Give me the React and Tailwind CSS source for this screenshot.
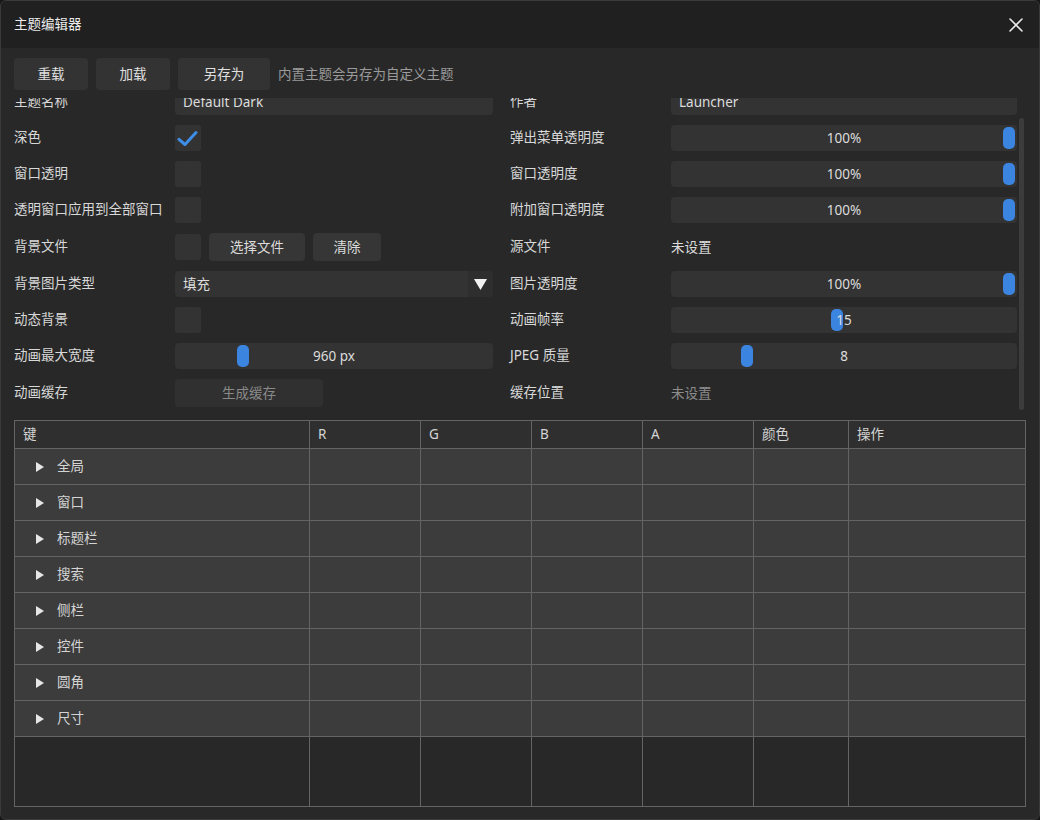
import React, { useLayoutEffect, useRef } from "react";

const font = { fontFamily: '"Noto Sans", "Noto Sans CJK SC", sans-serif' };

const Checkbox = ({ checked }) => (
  <div className="w-[26px] h-[26px] rounded-[3px] bg-[#333333] flex items-center justify-center">
    {checked && (
      <svg width="26" height="26" viewBox="0 0 26 26">
        <path d="M4 14.3 L10 19.5 L21 7.5" fill="none" stroke="#3d8ee8" strokeWidth="3" strokeLinecap="round" strokeLinejoin="round" />
      </svg>
    )}
  </div>
);

const Slider = ({ pct, text, w }) => (
  <div className={`relative h-[26px] rounded-[4px] bg-[#333333] flex items-center justify-center ${w}`}>
    <div
      className="absolute top-[2px] w-[12px] h-[22px] rounded-[5px] bg-[#3b84e0]"
      style={{ left: `calc(2px + (100% - 16px) * ${pct / 100})` }}
    />
    <span className="relative text-[#dcdcdc]">{text}</span>
  </div>
);

const Input = ({ value, w }) => (
  <div className={`h-[26px] rounded-[4px] bg-[#333333] px-2 flex items-center text-[#dcdcdc] ${w}`}>
    {value}
  </div>
);

const Label = ({ children }) => <div className="text-[#d8d8d8] -mt-[2px]">{children}</div>;

const Btn = ({ children, className = "" }) => (
  <button className={`h-[28px] rounded-[4px] bg-[#363636] text-[#dcdcdc] ${className}`}>{children}</button>
);

const groups = ["全局", "窗口", "标题栏", "搜索", "侧栏", "控件", "圆角", "尺寸"];
const cols = "grid grid-cols-[295px_111px_111px_111px_111px_95px_1fr]";
const headers = ["键", "R", "G", "B", "A", "颜色", "操作"];

export default function App() {
  const scrollRef = useRef(null);

  useLayoutEffect(() => {
    if (scrollRef.current) scrollRef.current.scrollTop = 9;
  }, []);

  return (
    <div className="w-[1040px] h-[820px] bg-[#161616]" style={font}>
      <div className="w-full h-full rounded-[6px] border border-[#3a3a3a] bg-[#282828] overflow-hidden flex flex-col text-[13.5px]">
        {/* title bar */}
        <div className="h-[47px] shrink-0 bg-[#202020] flex items-center justify-between pl-[13px] pr-[16px]">
          <span className="text-[#ececec]">主题编辑器</span>
          <svg width="14" height="14" viewBox="0 0 14 14">
            <path d="M1 1 L13 13 M13 1 L1 13" stroke="#e8e8e8" strokeWidth="1.6" strokeLinecap="round" />
          </svg>
        </div>

        <div className="flex-1 flex flex-col px-[13px] pt-[10px] pb-[12px]">
          {/* toolbar */}
          <div className="flex items-center gap-2 h-[32px]">
            <button className="h-[32px] w-[74px] rounded-[4px] bg-[#333333] text-[#e0e0e0]">重载</button>
            <button className="h-[32px] w-[74px] rounded-[4px] bg-[#333333] text-[#e0e0e0]">加载</button>
            <button className="h-[32px] w-[92px] rounded-[4px] bg-[#333333] text-[#e0e0e0]">另存为</button>
            <span className="text-[#9a9a9a]">内置主题会另存为自定义主题</span>
          </div>

          {/* settings */}
          <div className="relative mt-2 h-[312px]">
            <div ref={scrollRef} className="h-full overflow-hidden">
              <div className="grid grid-cols-[161px_335px_161px_346px] gap-y-[10px] items-center pb-[3px]">
                <Label>主题名称</Label>
                <Input value="Default Dark" w="w-[318px]" />
                <Label>作者</Label>
                <Input value="Launcher" w="w-full" />

                <Label>深色</Label>
                <Checkbox checked />
                <Label>弹出菜单透明度</Label>
                <Slider pct={100} text="100%" w="w-full" />

                <Label>窗口透明</Label>
                <Checkbox />
                <Label>窗口透明度</Label>
                <Slider pct={100} text="100%" w="w-full" />

                <Label>透明窗口应用到全部窗口</Label>
                <Checkbox />
                <Label>附加窗口透明度</Label>
                <Slider pct={100} text="100%" w="w-full" />

                <Label>背景文件</Label>
                <div className="flex items-center gap-2">
                  <Checkbox />
                  <Btn className="w-[96px]">选择文件</Btn>
                  <Btn className="w-[68px]">清除</Btn>
                </div>
                <Label>源文件</Label>
                <div className="text-[#dcdcdc]">未设置</div>

                <Label>背景图片类型</Label>
                <div className="w-[318px] h-[26px] rounded-[4px] bg-[#333333] flex items-center overflow-hidden">
                  <span className="flex-1 pl-2 text-[#dcdcdc]">填充</span>
                  <div className="w-[25px] h-full bg-[#2e2e2e] flex items-center justify-center">
                    <svg width="13" height="11" viewBox="0 0 13 11">
                      <path d="M0 0 H13 L6.5 11 Z" fill="#f2f2f2" />
                    </svg>
                  </div>
                </div>
                <Label>图片透明度</Label>
                <Slider pct={100} text="100%" w="w-full" />

                <Label>动态背景</Label>
                <Checkbox />
                <Label>动画帧率</Label>
                <Slider pct={48} text="15" w="w-full" />

                <Label>动画最大宽度</Label>
                <Slider pct={20} text="960 px" w="w-[318px]" />
                <Label>JPEG 质量</Label>
                <Slider pct={20.6} text="8" w="w-full" />

                <Label>动画缓存</Label>
                <button className="w-[148px] h-[28px] rounded-[4px] bg-[#303030] text-[#8a8a8a]">生成缓存</button>
                <Label>缓存位置</Label>
                <div className="text-[#8c8c8c]">未设置</div>
              </div>
            </div>
            <div className="absolute right-[2px] top-[20px] bottom-0 w-[5px] rounded-full bg-[#3c3c3c]" />
          </div>

          {/* color table */}
          <div className="mt-[10px] flex-1 flex flex-col border border-[#646464] text-[#d4d4d4]">
            <div className={`${cols} h-[28px] shrink-0 bg-[#2f2f2f] border-b border-[#646464]`}>
              {headers.map((h, i) => (
                <div
                  key={h}
                  className={`flex items-center pl-2 ${i < headers.length - 1 ? "border-r border-[#646464]" : ""}`}
                >
                  {h}
                </div>
              ))}
            </div>
            {groups.map((g) => (
              <div key={g} className={`${cols} h-[36px] shrink-0 bg-[#3c3c3c] border-b border-[#646464]`}>
                <div className="flex items-center pl-[21px] gap-[13px] border-r border-[#646464]">
                  <svg width="8" height="10" viewBox="0 0 8 10">
                    <path d="M0 0 L8 5 L0 10 Z" fill="#e6e6e6" />
                  </svg>
                  <span>{g}</span>
                </div>
                {[0, 1, 2, 3, 4].map((c) => (
                  <div key={c} className="border-r border-[#646464]" />
                ))}
                <div />
              </div>
            ))}
            <div className={`${cols} flex-1`}>
              {[0, 1, 2, 3, 4, 5].map((c) => (
                <div key={c} className="border-r border-[#646464]" />
              ))}
              <div />
            </div>
          </div>
        </div>
      </div>
    </div>
  );
}
